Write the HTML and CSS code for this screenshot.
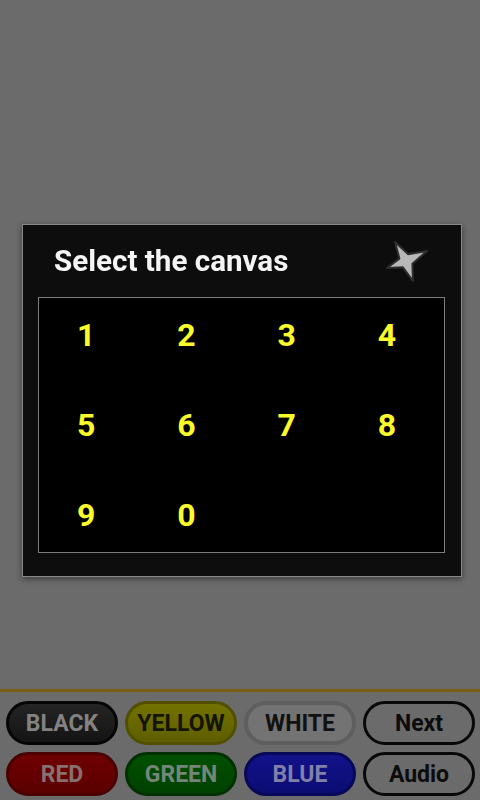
FILE: index.html
```html
<!DOCTYPE html>
<html>
<head>
<meta charset="utf-8">
<link rel="stylesheet" href="styles.css">
</head>
<body>
<div class="app">
  <div class="canvas-area"></div>
  <div class="divider"></div>
  <div class="buttons">
    <div class="btn btn-black">BLACK</div>
    <div class="btn btn-yellow">YELLOW</div>
    <div class="btn btn-white">WHITE</div>
    <div class="btn btn-outline">Next</div>
    <div class="btn btn-red">RED</div>
    <div class="btn btn-green">GREEN</div>
    <div class="btn btn-blue">BLUE</div>
    <div class="btn btn-outline">Audio</div>
  </div>
</div>
<div class="overlay">
  <div class="dialog">
    <div class="dialog-head">
      <div class="dialog-title">Select the canvas</div>
      <svg class="close" width="48" height="48" viewBox="-24 -24 48 48">
        <path d="M-11 -19 L2.2 -6.7 L21 -10 L6.4 2.7 L7 20 L-3.1 6.3 L-19 7 L-6.6 -2.4 Z" fill="#b8b8b8" stroke="#2e2e2e" stroke-width="2" stroke-linejoin="round"/>
      </svg>
    </div>
    <div class="grid-box">
      <div class="grid">
        <div class="num">1</div>
        <div class="num">2</div>
        <div class="num">3</div>
        <div class="num">4</div>
        <div class="num">5</div>
        <div class="num">6</div>
        <div class="num">7</div>
        <div class="num">8</div>
        <div class="num">9</div>
        <div class="num">0</div>
      </div>
    </div>
  </div>
</div>
</body>
</html>
```
FILE: styles.css
```css
html, body {
  margin: 0;
  padding: 0;
}
body {
  width: 480px;
  height: 800px;
  background: #6b6b6b;
  font-family: Roboto, "Liberation Sans", sans-serif;
  overflow: hidden;
}
.app {
  height: 800px;
  display: flex;
  flex-direction: column;
}
.canvas-area {
  height: 689px;
}
.divider {
  height: 3px;
  background: #7b5e13;
}
.buttons {
  display: grid;
  grid-template-columns: repeat(4, 112px);
  grid-auto-rows: 44px;
  column-gap: 7px;
  row-gap: 7px;
  padding: 9px 7px 0 6px;
}
.btn {
  box-sizing: border-box;
  border-radius: 22px;
  display: flex;
  align-items: center;
  justify-content: center;
  font-weight: bold;
  font-size: 23px;
  border: 3px solid #0b0b0b;
}
.btn-black {
  background: linear-gradient(#242424, #141414);
  color: #828282;
  border-color: #050505;
}
.btn-yellow {
  background: linear-gradient(#727200, #5e5e00);
  color: #141400;
  border-color: #505000;
}
.btn-white {
  background: #737373;
  color: #111111;
  border: 4px solid #5e5e5e;
}
.btn-outline {
  background: transparent;
  color: #0c0c0c;
  border-color: #080808;
}
.btn-red {
  background: linear-gradient(#6e0000, #5c0000);
  color: #867070;
  border-color: #4a0000;
}
.btn-green {
  background: linear-gradient(#005000, #004000);
  color: #74867a;
  border-color: #003000;
}
.btn-blue {
  background: linear-gradient(#12128a, #0c0c74);
  color: #8080a8;
  border-color: #080858;
}
.overlay {
  position: fixed;
  inset: 0;
  display: flex;
  align-items: center;
  justify-content: center;
}
.dialog {
  box-sizing: border-box;
  width: 440px;
  height: 353px;
  margin-left: 4px;
  background: #0d0d0d;
  border: 1px solid #888888;
  box-shadow: 0 2px 6px rgba(0, 0, 0, 0.45);
  display: flex;
  flex-direction: column;
  padding: 0 16px 23px 15px;
}
.dialog-head {
  height: 72px;
  display: flex;
  align-items: center;
  justify-content: space-between;
  padding-left: 16px;
  padding-right: 15px;
}
.dialog-title {
  color: #f4f4f4;
  font-weight: bold;
  font-size: 29.6px;
}
.close {
  display: block;
}
.grid-box {
  flex: 1;
  border: 1px solid #7d7d7d;
  background: #000000;
}
.grid {
  display: grid;
  grid-template-columns: repeat(4, 100.3px);
  grid-auto-rows: 74px;
  row-gap: 16px;
  margin-left: -3px;
}
.num {
  color: #fafa2a;
  font-weight: bold;
  font-size: 32px;
  display: flex;
  align-items: center;
  justify-content: center;
}
```
